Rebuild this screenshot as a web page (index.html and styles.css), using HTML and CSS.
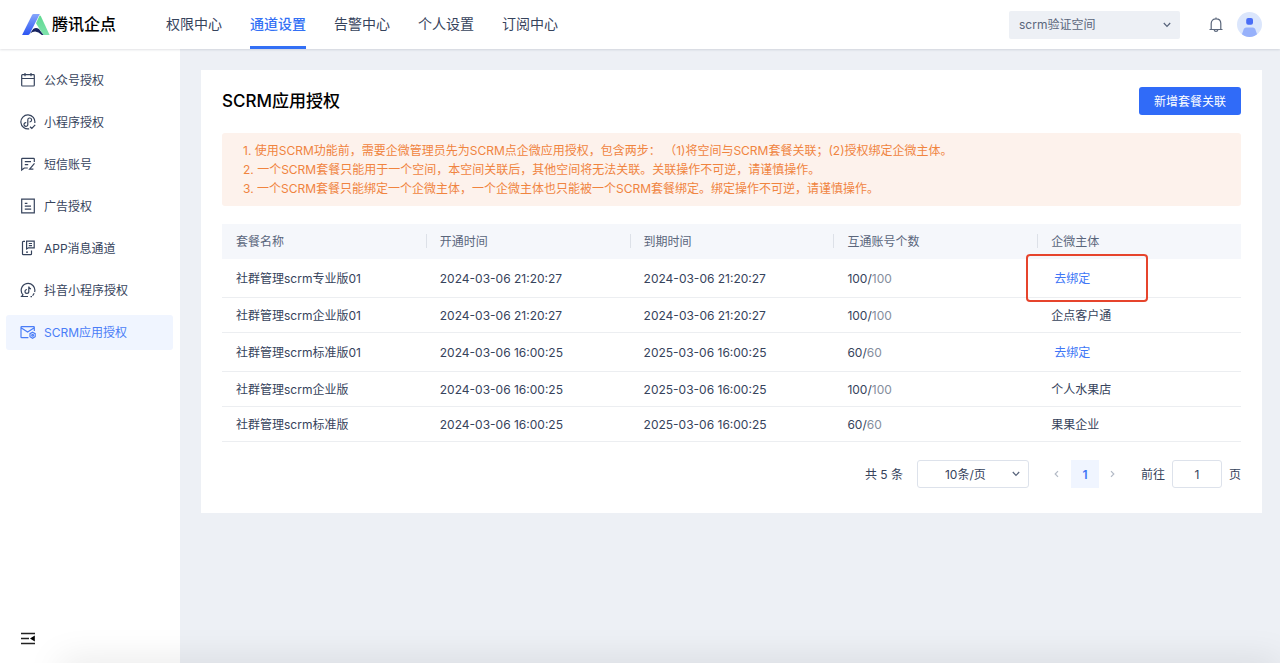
FILE: index.html
```html
<!DOCTYPE html>
<html lang="zh-CN">
<head>
<meta charset="utf-8">
<meta name="viewport" content="width=device-width, initial-scale=1">
<title>SCRM应用授权</title>
<link rel="stylesheet" href="styles.css">
</head>
<body>
<div class="app">
  <header class="topbar">
    <a class="brand" href="#">
      <svg class="brand-mark" width="28" height="22" viewBox="0 0 28 22" aria-hidden="true">
        <defs>
          <linearGradient id="blue" x1="0" y1="0" x2="0" y2="1"><stop offset="0" stop-color="#86a6fb"/><stop offset="1" stop-color="#2c55f2"/></linearGradient>
          <linearGradient id="green" x1="0" y1="0" x2="0" y2="1"><stop offset="0" stop-color="#5fd991"/><stop offset="1" stop-color="#7fe3ac"/></linearGradient>
        </defs>
        <path fill="url(#green)" d="M17.6 1.6 Q18.4 1.2 19 2.4 L27.6 21 H21.2 L14 9.2 Z"/>
        <path fill="#17235f" d="M8 19.5 L11.2 15 Q14 12.8 17 15 L21.4 21 H19.8 Q14 14.6 8 19.5 Z"/>
        <path fill="url(#blue)" d="M10.2 0.8 Q10.7 0 11.6 0 H17.8 L7.6 20 Q7 21 6 21 H0.4 Q0 21 .3 20.4 Z"/>
      </svg>
      <span class="brand-name">腾讯企点</span>
    </a>
    <nav class="topnav" aria-label="主导航">
      <a href="#">权限中心</a>
      <a href="#" class="is-active" aria-current="page">通道设置</a>
      <a href="#">告警中心</a>
      <a href="#">个人设置</a>
      <a href="#">订阅中心</a>
    </nav>
    <div class="top-tools">
      <div class="select-box space-select">
        <select aria-label="空间"><option>scrm验证空间</option></select>
        <svg class="chevron" width="8" height="6" viewBox="0 0 8 6" aria-hidden="true"><path d="M.8 1 L4 4.3 L7.2 1"/></svg>
      </div>
      <button class="icon-button bell" type="button" aria-label="通知">
        <svg class="line-icon" width="14" height="16" viewBox="0 0 14 16" aria-hidden="true"><path d="M.5 12.5 H13.5 M2.2 12.3 V6.6 C2.2 3.6 4.2 1.8 7 1.8 C9.8 1.8 11.8 3.6 11.8 6.6 V12.3 M7 1.8 V.6 M5.2 13 C5.4 14.8 8.6 14.8 8.8 13"/></svg>
      </button>
      <button class="icon-button" type="button" aria-label="账户">
        <svg width="25" height="25" viewBox="0 0 25 25" aria-hidden="true">
          <defs><clipPath id="disc"><circle cx="12.5" cy="12.5" r="12.5"/></clipPath></defs>
          <circle cx="12.5" cy="12.5" r="12.5" fill="#dbe6fc"/>
          <path clip-path="url(#disc)" fill="#97b1fb" d="M9 15.5 H16 Q17.5 15.5 18.2 17 L21 25 H4 L6.8 17 Q7.5 15.5 9 15.5 Z"/>
          <rect x="9.2" y="6" width="6.8" height="6.8" rx="2" fill="#4a6ef6"/>
        </svg>
      </button>
    </div>
  </header>

  <div class="body">
    <aside class="sidebar">
      <nav class="sidenav" aria-label="通道设置">
        <a href="#">
          <svg class="line-icon" width="16" height="16" viewBox="0 0 16 16" aria-hidden="true"><path d="M2.5 2.6 H13.5 Q14.3 2.6 14.3 3.4 V13.2 Q14.3 14 13.5 14 H2.5 Q1.7 14 1.7 13.2 V3.4 Q1.7 2.6 2.5 2.6 Z M1.7 6.5 H14.3 M5 1 V4.2 M11 1 V4.2"/></svg>
          公众号授权</a>
        <a href="#">
          <svg class="line-icon" width="16" height="16" viewBox="0 0 16 16" aria-hidden="true"><path d="M14.8 9 A7 7 0 1 0 9.2 14.8 M10 12.8 L11.8 14.4 L15.2 10.8 M6.2 8.6 A1.9 1.9 0 1 0 7.8 10.4 V5.8 A1.9 1.9 0 1 1 9.6 7.8"/></svg>
          小程序授权</a>
        <a href="#">
          <svg class="line-icon" width="16" height="16" viewBox="0 0 16 16" aria-hidden="true"><path d="M14.3 6 V3 Q14.3 2.3 13.6 2.3 H2.4 Q1.7 2.3 1.7 3 V14 L4.3 12 H7.8 M4.8 5.6 H11 M4.8 8.6 H8.2 M14.5 7.4 L9.6 13.2 H13.4"/></svg>
          短信账号</a>
        <a href="#">
          <svg class="line-icon" width="16" height="16" viewBox="0 0 16 16" aria-hidden="true"><path d="M1.7 1.2 H14.3 V14.8 H1.7 Z M4.8 5.3 H7.4 M4.8 8.2 H11 M4.8 11.2 H11.2"/></svg>
          广告授权</a>
        <a href="#">
          <svg class="line-icon" width="16" height="16" viewBox="0 0 16 16" aria-hidden="true"><path d="M5 1.4 H3.4 Q2.5 1.4 2.5 2.3 V13.8 Q2.5 14.7 3.4 14.7 H10.6 Q11.5 14.7 11.5 13.8 V10.5 M6.6 1.2 H14.2 V7.8 H8.4 L6.6 9 Z M8.8 3.5 H12 M8.8 5.6 H12 M6 12.2 H8"/></svg>
          APP消息通道</a>
        <a href="#">
          <svg class="line-icon" width="16" height="16" viewBox="0 0 16 16" aria-hidden="true"><path d="M14.6 10 A6.8 6.8 0 1 0 3 12.8 L1.6 14.5 H8 M14.2 11.2 L12.6 13.8 M10.5 14.6 H12 M8.8 4.6 V9.4 A1.9 1.9 0 1 1 6.9 7.5 M8.8 4.6 Q9.2 6.6 11 6.8"/></svg>
          抖音小程序授权</a>
        <a href="#" class="is-active" aria-current="page">
          <svg class="line-icon" width="16" height="16" viewBox="0 0 16 16" aria-hidden="true"><path d="M14.3 7 V3.3 Q14.3 2.6 13.6 2.6 H1.7 Q1 2.6 1 3.3 V13 Q1 13.7 1.7 13.7 H8.4 M1 3.8 L7.6 8 L14.3 3.8"/><path d="M12.6 8.2 L15.2 9.7 V12.7 L12.6 14.2 L10 12.7 V9.7 Z"/><circle cx="12.6" cy="11.2" r=".9"/></svg>
          SCRM应用授权</a>
      </nav>
      <button class="icon-button collapse" type="button" aria-label="收起菜单">
        <svg width="14" height="13" viewBox="0 0 14 13" aria-hidden="true"><path fill="none" stroke="#222" stroke-width="1.3" d="M0 1.5 H14 M0 6.5 H8 M0 11.5 H14"/><path fill="#000" d="M9 6.5 L13.8 3.4 V9.6 Z"/></svg>
      </button>
    </aside>

    <main class="content">
      <section class="card">
        <div class="card-head">
          <h1>SCRM应用授权</h1>
          <button class="primary" type="button">新增套餐关联</button>
        </div>
        <ul class="notice">
          <li>1. 使用SCRM功能前，需要企微管理员先为SCRM点企微应用授权，包含两步： （1)将空间与SCRM套餐关联；(2)授权绑定企微主体。</li>
          <li>2. 一个SCRM套餐只能用于一个空间，本空间关联后，其他空间将无法关联。关联操作不可逆，请谨慎操作。</li>
          <li>3. 一个SCRM套餐只能绑定一个企微主体，一个企微主体也只能被一个SCRM套餐绑定。绑定操作不可逆，请谨慎操作。</li>
        </ul>
        <table class="packages">
          <thead>
            <tr><th scope="col">套餐名称</th><th scope="col">开通时间</th><th scope="col">到期时间</th><th scope="col">互通账号个数</th><th scope="col">企微主体</th></tr>
          </thead>
          <tbody>
            <tr class="has-action"><td>社群管理scrm专业版01</td><td>2024-03-06 21:20:27</td><td>2024-03-06 21:20:27</td><td>100/<span class="total">100</span></td><td class="marked"><a class="bind" href="#">去绑定</a></td></tr>
            <tr><td>社群管理scrm企业版01</td><td>2024-03-06 21:20:27</td><td>2024-03-06 21:20:27</td><td>100/<span class="total">100</span></td><td>企点客户通</td></tr>
            <tr class="has-action"><td>社群管理scrm标准版01</td><td>2024-03-06 16:00:25</td><td>2025-03-06 16:00:25</td><td>60/<span class="total">60</span></td><td><a class="bind" href="#">去绑定</a></td></tr>
            <tr><td>社群管理scrm企业版</td><td>2024-03-06 16:00:25</td><td>2025-03-06 16:00:25</td><td>100/<span class="total">100</span></td><td>个人水果店</td></tr>
            <tr><td>社群管理scrm标准版</td><td>2024-03-06 16:00:25</td><td>2025-03-06 16:00:25</td><td>60/<span class="total">60</span></td><td>果果企业</td></tr>
          </tbody>
        </table>
        <div class="pagination">
          <span>共 5 条</span>
          <div class="select-box size-select">
            <select aria-label="每页条数"><option>10条/页</option></select>
            <svg class="chevron" width="8" height="6" viewBox="0 0 8 6" aria-hidden="true"><path d="M.8 1 L4 4.3 L7.2 1"/></svg>
          </div>
          <div class="pages">
            <button type="button" aria-label="上一页"><svg class="arrow" width="5" height="8" viewBox="0 0 5 8" aria-hidden="true"><path d="M4 1.2 L1.2 4 L4 6.8"/></svg></button>
            <button type="button" class="is-current" aria-current="page">1</button>
            <button type="button" aria-label="下一页"><svg class="arrow" width="5" height="8" viewBox="0 0 5 8" aria-hidden="true"><path d="M1 1.2 L3.8 4 L1 6.8"/></svg></button>
          </div>
          <div class="jump">
            <label for="page">前往</label>
            <input id="page" type="text" value="1">
            <span>页</span>
          </div>
        </div>
      </section>
    </main>
  </div>
</div>
</body>
</html>
```

FILE: styles.css
```css
*,
*::before,
*::after {
  box-sizing: border-box;
}

body {
  margin: 0;
  color: #36435c;
  background: #edf0f5;
  font-family: Inter, "Noto Sans CJK SC", sans-serif;
  font-size: 12px;
  line-height: 19px;
}

a {
  color: inherit;
  text-decoration: none;
}

button,
input,
select {
  font: inherit;
  color: inherit;
}

svg {
  display: block;
  flex: none;
}

.app {
  display: flex;
  flex-direction: column;
  min-height: 100vh;
  position: relative;
  overflow: hidden;
}

/* soft shade along the bottom edge of the window */
.app::after {
  content: "";
  position: absolute;
  left: 60px;
  right: 0;
  bottom: -20px;
  height: 20px;
  box-shadow: 0 0 36px rgba(0, 0, 0, 0.13);
  pointer-events: none;
}

.topbar {
  display: flex;
  align-items: center;
  height: 49px;
  padding: 0 18px 0 22px;
  background: #fff;
  box-shadow: 0 1px 2px rgba(40, 50, 70, 0.14);
  position: relative;
}

.brand {
  display: flex;
  align-items: center;
  gap: 2px;
}

.brand-name {
  color: #000;
  font-size: 16px;
  font-weight: 500;
}

.topnav {
  display: flex;
  gap: 28px;
  align-self: stretch;
  margin-left: 50px;
  font-size: 14px;
}

.topnav a {
  display: flex;
  align-items: center;
  border-bottom: 3px solid transparent;
}

.topnav .is-active {
  color: #3370f5;
  font-weight: 500;
  border-color: #3370f5;
}

.top-tools {
  display: flex;
  align-items: center;
  margin-left: auto;
}

.select-box {
  position: relative;
}

.select-box select {
  width: 100%;
  height: 28px;
  border: 0;
  border-radius: 2px;
  appearance: none;
  background: transparent;
}

.chevron {
  position: absolute;
  right: 9px;
  top: 11px;
  fill: none;
  stroke: #56627a;
  stroke-width: 1.2;
  pointer-events: none;
}

.space-select {
  width: 171px;
  margin-right: 29px;
}

.space-select select {
  padding: 0 10px;
  color: #5a667b;
  background: #edf0f5;
}

.icon-button {
  padding: 0;
  border: 0;
  background: none;
}

.icon-button + .icon-button {
  margin-left: 14px;
}

.bell {
  color: #5a667b;
}

.line-icon {
  fill: none;
  stroke: currentColor;
  stroke-width: 1.2;
}

.body {
  display: flex;
  flex: 1;
}

.sidebar {
  display: flex;
  flex-direction: column;
  justify-content: space-between;
  flex: none;
  width: 180px;
  padding: 14px 7px 18px 6px;
  background: #fff;
}

.sidenav {
  display: flex;
  flex-direction: column;
  gap: 7px;
}

.sidenav a {
  display: flex;
  align-items: center;
  gap: 8px;
  height: 35px;
  padding-left: 14px;
  border-radius: 3px;
}

.sidenav .line-icon {
  margin-bottom: 1px;
}

.sidenav .is-active {
  color: #4a7df7;
  background: #f0f5ff;
}

.collapse {
  align-self: flex-start;
  margin-left: 15px;
}

.content {
  flex: 1;
  min-width: 0;
  padding: 21px 18px 21px 21px;
}

.card {
  padding: 17px 21px 25px;
  background: #fff;
}

.card-head {
  display: flex;
  align-items: center;
  justify-content: space-between;
  margin-bottom: 18px;
}

h1 {
  margin: 0;
  color: #000;
  font-size: 17px;
  font-weight: 500;
  line-height: 24px;
}

.primary {
  height: 28px;
  padding: 0 15px;
  border: 0;
  border-radius: 3px;
  color: #fff;
  background: #306bf8;
}

.notice {
  margin: 0 0 18px;
  padding: 8px 21px;
  border-radius: 3px;
  color: #f0843f;
  background: #fdf2ec;
  list-style: none;
}

.packages {
  width: 100%;
  border-collapse: separate;
  border-spacing: 0;
  table-layout: fixed;
}

.packages th,
.packages td {
  height: 35px;
  padding: 0 14px;
  text-align: left;
}

.packages th {
  position: relative;
  color: #5a667b;
  background: #f5f7fb;
  font-weight: 400;
}

.packages th + th::before {
  content: "";
  position: absolute;
  left: 0;
  top: 10px;
  height: 14px;
  border-left: 1px solid #dde1e8;
}

.packages td {
  border-bottom: 1px solid #eceef1;
}

.packages .has-action td {
  height: 39px;
}

.total {
  color: #858d9d;
}

.bind {
  padding: 0 3px;
  color: #4077f6;
}

.marked {
  position: relative;
}

/* highlight frame drawn over the cell */
.marked::after {
  content: "";
  position: absolute;
  left: -11px;
  top: -5px;
  width: 122px;
  height: 48px;
  border: 2px solid #e6442c;
  border-radius: 4px;
  pointer-events: none;
}

.pagination {
  display: flex;
  align-items: center;
  justify-content: flex-end;
  margin-top: 18px;
}

.size-select {
  width: 112px;
  margin: 0 14px;
}

.size-select select {
  padding: 0 27px;
  border: 1px solid #dde2eb;
  border-radius: 3px;
}

.pages {
  display: flex;
}

.pages button {
  display: flex;
  align-items: center;
  justify-content: center;
  width: 28px;
  height: 28px;
  padding: 0;
  border: 0;
  background: none;
}

.pages .is-current {
  color: #4077f6;
  background: #f0f5ff;
  font-weight: 600;
}

.arrow {
  fill: none;
  stroke: #b3bac6;
  stroke-width: 1.2;
}

.jump {
  display: flex;
  align-items: center;
  gap: 7px;
  margin-left: 14px;
}

.jump input {
  width: 50px;
  height: 28px;
  padding: 0;
  border: 1px solid #dde2eb;
  border-radius: 3px;
  text-align: center;
}
```
